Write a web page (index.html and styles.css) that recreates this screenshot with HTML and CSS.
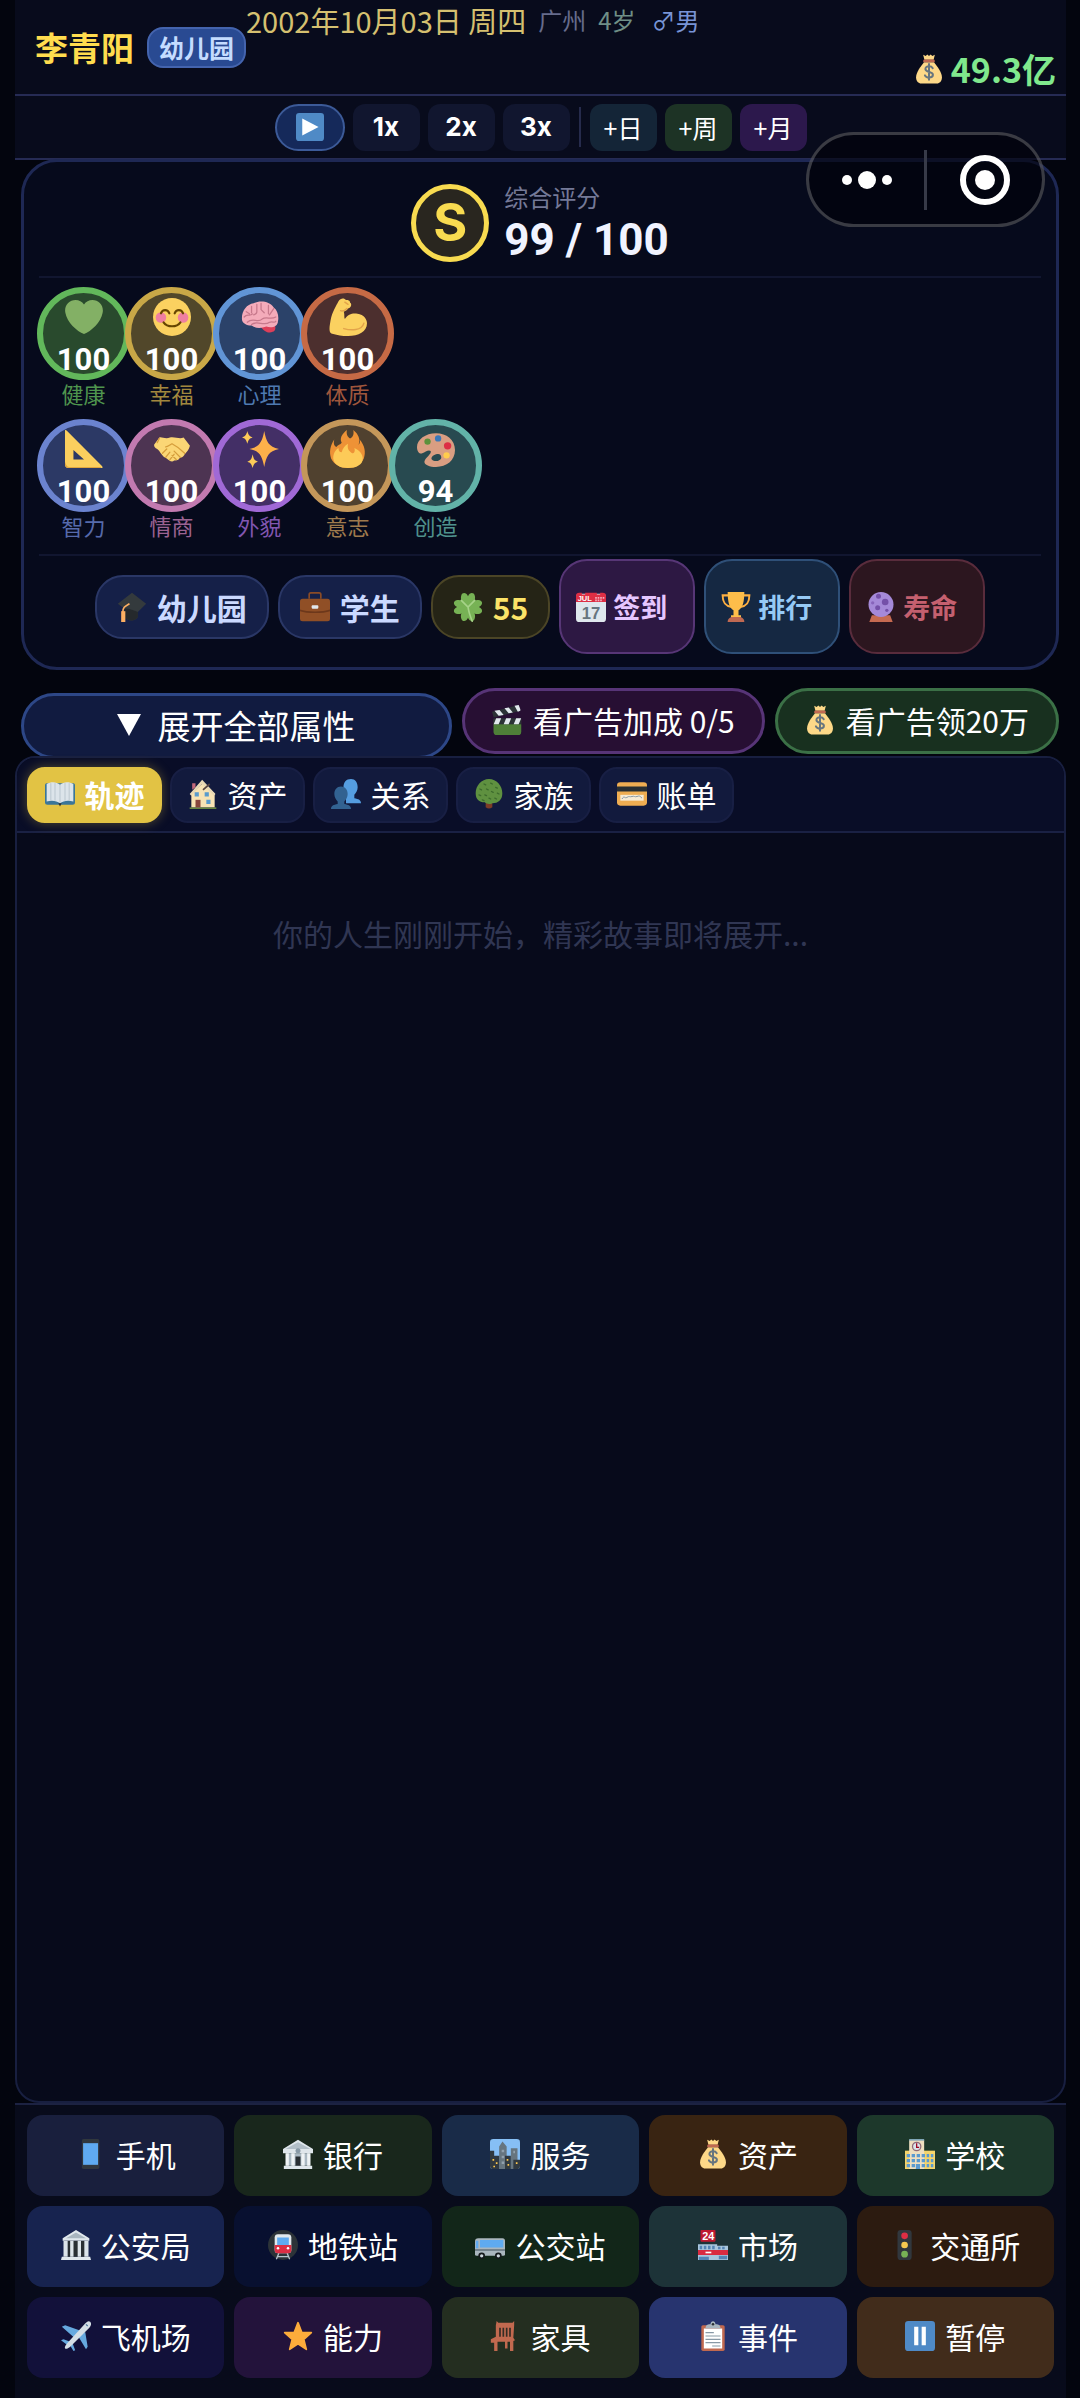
FILE: index.html
```
<!DOCTYPE html>
<html lang="zh-CN">
<head>
  <meta charset="UTF-8">
  <meta name="viewport" content="width=device-width, initial-scale=1.0">
  <title>人生模拟</title>
  <link rel="stylesheet" href="styles.css">
</head>
<body>
  <!-- icon sprite -->
  <svg class="sprite" aria-hidden="true">
    <symbol id="i-bag" viewBox="0 0 36 36">
      <path fill="#fdd888" d="M12 10c-4 5-9.500 12-9.500 18 0 5 3 7.500 6 7.500h19c3 0 6-2.500 6-7.500 0-6-5.500-13-9.500-18z"/>
      <path fill="#fdd888" d="M11 1l3 1.500L16 .5l2 2 2-2 2 2L25 1l-1.500 6h-11z"/>
      <path fill="#bf6952" d="M12 6.500h12c1 0 1.500 3.500 0 3.500H12c-1.500 0-1-3.500 0-3.500z"/>
      <path fill="none" stroke="#67757f" stroke-width="2.400" stroke-linecap="round" d="M22.500 17c-1-1.800-2.700-2.300-4.500-2.300-2.600 0-4.300 1.300-4.300 3.300 0 4.700 9 2.300 9 6.900 0 2.300-2 3.400-4.600 3.400-2.300 0-4.100-.8-5-2.700M18 12v19"/>
    </symbol>
    <symbol id="i-play" viewBox="0 0 36 36">
      <rect width="36" height="36" rx="4" fill="#4f8ac6"/><path fill="#fff" d="M8 7l21 11L8 29z"/>
    </symbol>
    <symbol id="i-pause" viewBox="0 0 36 36">
      <rect width="36" height="36" rx="4" fill="#4f8ac6"/><path fill="#fff" d="M11 7h5v22h-5zM20 7h5v22h-5z"/>
    </symbol>
    <symbol id="i-heart" viewBox="0 0 36 36">
      <path fill="#83b065" d="M35.900 11.800c0-5.400-4.400-9.800-9.900-9.800-3.300 0-6.200 1.600-8 4.100C16.200 3.600 13.300 2 10 2 4.500 2 .1 6.400.1 11.800c0 .8.100 1.500.3 2.300C1.800 22.600 11.200 31.600 18 34c6.800-2.400 16.200-11.400 17.600-19.900.2-.8.300-1.500.3-2.300z"/>
    </symbol>
    <symbol id="i-smile" viewBox="0 0 36 36">
      <circle cx="18" cy="18" r="18" fill="#fbd160"/>
      <circle cx="7.500" cy="18.500" r="5" fill="#ef7fa0"/><circle cx="28.500" cy="18.500" r="5" fill="#ef7fa0"/>
      <path fill="none" stroke="#664500" stroke-width="2" stroke-linecap="round" d="M7.500 14.500c1.500-4 6.500-4 8 0M20.500 14.500c1.500-4 6.500-4 8 0M10 23c3.500 5 12.500 5 16 0"/>
    </symbol>
    <symbol id="i-brain" viewBox="0 0 36 36">
      <path fill="#dd3f59" d="M18 26c3 6 9 8 12 6 3-1 3-4 2-7z"/>
      <path fill="#f4abba" d="M1 21C0 13 5 6 12 5c6-3 15-2 19 4 4 3 5 9 4 13 0 5-6 7-11 5-5 2-10 2-14-1-5 0-8-2-9-5z"/>
      <path fill="none" stroke="#c7798c" stroke-width="1.200" stroke-linecap="round" d="M3 18c3-4 5 0 8-3M10 8v6M15 6v7c0 2-3 3-3 3M19 5v6l3 3M26 7v8M31 10l-4 6M6 23c5-5 10 1 14-3 4-3 8 1 13-2M10 25c5-4 12 2 17-2 3-1 5 1 6-1M5 13l3 2"/>
    </symbol>
    <symbol id="i-arm" viewBox="0 0 36 36">
      <path fill="#fbd160" d="M4 34C-1 34 .5 27 1.500 21 3 13 7 7 9 3c2-3.500 6-3 7-1 0 0 4-.5 4 2.500 2 1 1 5-2 5.500-1 2-4 3-4 3 1 3 0 5 1 7 3-5 8-6 12-5 6 1 9 5 9 9 0 8-8 12-18 12-6 0-10-1-14-2z"/>
      <path fill="none" stroke="#e2a34a" stroke-width="1.400" stroke-linecap="round" d="M14 29c7 2 17 2 19-5M11 12c2 1 5-1 6-2M15 4l3 2"/>
    </symbol>
    <symbol id="i-ruler" viewBox="0 0 36 36">
      <path fill="#fbcf5e" fill-rule="evenodd" d="M0 1c0-2 1-1 2 0l33 33c1 1 1 2-1 2H4c-3 0-4-1-4-4zM8 19v9h10z"/>
      <path fill="#e0a63e" d="M0 30v2c0 3 1 4 4 4h30v-1H4c-2 0-3-2-4-5z"/>
    </symbol>
    <symbol id="i-shake" viewBox="0 0 36 36">
      <path fill="#fbd675" d="M1 14l5-7c2-1 6 2 10 0 5-1 9 2 13 0l6 8c-1 4-3 6-5 8-1 3-4 3-5 4-1 2-4 2-5 2-2 2-5 0-7-2-5-2-6-7-9-9-2-1-3-2-3-4z"/>
      <path fill="none" stroke="#d59d3b" stroke-width="1.200" stroke-linecap="round" d="M12 16c2 0 4-2 6-3 4 2 8 5 12 9M9 22l4-4M12 26l4-5M16 28l4-5M20 20l6 6M18 24l4 4M6 8l-2 4"/>
    </symbol>
    <symbol id="i-sparkle" viewBox="0 0 36 36">
      <path fill="#fdb04a" d="M22 1c2 10 4 15 14 17-10 2-12 7-14 17-2-10-4-15-14-17C18 16 20 11 22 1z"/>
      <path fill="#fdcb58" d="M6 1c1 4 2 5 5 6-3 1-4 2-5 6-1-4-2-5-5-6 3-1 4-2 5-6zM11 23c1 5 2 6 5 7-3 1-4 2-5 6-1-4-2-5-5-6 3-1 4-2 5-7z"/>
    </symbol>
    <symbol id="i-fire" viewBox="0 0 36 36">
      <path fill="#ee9236" d="M12 12c-2-4 0-8 5-12-1 4 1 7 3 8 2-1 4-3 3-8 5 4 7 9 5 14 1-1 2-3 1-5 5 6 6 12 4 18-3 6-8 9-15 9S5 33 2 27C0 21 1 15 5 9c-1 4 0 6 2 7 1-2 4-2 5-4z"/>
      <path fill="#fdcb58" d="M4 27c0-5 2-8 5-10 0 3 1 4 3 4 1-4 3-6 6-8-1 5 1 7 4 9 2 0 3-2 2-5 5 2 8 6 8 10 0 6-6 9-14 9S5 33 4 27z"/>
    </symbol>
    <symbol id="i-palette" viewBox="0 0 36 36">
      <path fill="#d99e82" fill-rule="evenodd" d="M18 3C8 3 0 9 0 16c0 5 3 7 5 6 3-1 6-4 8-2 1 3-5 6-6 10 0 3 5 5 11 5 10 0 18-6 18-16S28 3 18 3zm0 20c3-1 5 0 5 3s-6 5-9 2c-1-2 1-4 4-5z"/>
      <circle cx="10" cy="11" r="3" fill="#5c913b"/><circle cx="20" cy="8" r="3" fill="#3b78b8"/><circle cx="29" cy="15" r="3.500" fill="#dd2e44"/><circle cx="28" cy="24" r="3" fill="#ffcc4d"/>
    </symbol>
    <symbol id="i-cap" viewBox="0 0 36 36">
      <path fill="#343a3d" d="M18 1l17 13-10 10v6c-3 6-13 5-16 0V20L1 14z"/>
      <path fill="#25292c" d="M9 20c6-1 12 3 16 4v6c-3 6-13 5-16 0z"/>
      <path fill="none" stroke="#fdaf62" stroke-width="2" d="M15 14c-5 3-8 4-8 10"/><path fill="#fdaf62" d="M5 23h5v13H5z"/>
    </symbol>
    <symbol id="i-case" viewBox="0 0 36 36">
      <path fill="none" stroke="#8a4b26" stroke-width="2" d="M11 8V3q0-2 2-2h10q2 0 2 2v5"/>
      <rect y="8" width="36" height="27" rx="3" fill="#904f26"/><path fill="#6d381b" d="M0 21c8 3 28 3 36 0v2c-8 3-28 3-36 0z"/><rect x="14" y="16" width="8" height="4" rx="1" fill="#e1e8ed"/>
    </symbol>
    <symbol id="i-clover" viewBox="0 0 36 36">
      <path fill="#77b255" d="M18 18C12 16 8 9 10 4c1-4 6-4 8 1 2-5 7-5 8-1 2 5-2 12-8 14z"/>
      <path fill="#77b255" d="M18 18c2-6 9-10 14-8 4 1 4 6-1 8 5 2 5 7 1 8-5 2-12-2-14-8zM18 18C16 12 9 8 4 10c-4 1-4 6 1 8-5 2-5 7-1 8 5 2 12-2 14-8z"/>
      <path fill="#77b255" d="M18 18c-6 2-10 9-8 14 1 4 6 4 8-1 2 5 7 5 8 1 2-5-2-12-8-14z"/>
      <path fill="none" stroke="#a6d388" stroke-width="2" stroke-linecap="round" d="M10 10l8 8 8-8M18 18c1 7 3 12 5 17"/>
    </symbol>
    <symbol id="i-date" viewBox="0 0 36 36">
      <rect y="2" width="36" height="34" rx="4" fill="#dfe7ed"/><path fill="#dd2e44" d="M0 12V5q0-4 4-4h3v2h4V1h14v2h4V1h3q4 0 4 4v7z"/>
      <path fill="#f4abba" d="M23 6h2v2h-2zM26 6h2v2h-2zM29 6h2v2h-2zM32 6h2v2h-2zM23 9h2v2h-2zM26 9h2v2h-2zM29 9h2v2h-2z"/>
      <text x="2" y="11" class="cal-month">JUL</text><text x="7" y="32" class="cal-day">17</text>
    </symbol>
    <symbol id="i-cup" viewBox="0 0 36 36">
      <path fill="none" stroke="#fdaf42" stroke-width="2.500" d="M9 4H2c0 9 3 13 11 14M27 4h7c0 9-3 13-11 14"/>
      <path fill="#fdbd4a" d="M8 0h20c0 12-2 19-7 22v6h3v3H12v-3h3v-6C10 19 8 12 8 0z"/><path fill="#bf6952" d="M8 36c0-4 3-6 6-6h8c3 0 6 2 6 6z"/>
    </symbol>
    <symbol id="i-crystal" viewBox="0 0 36 36">
      <path fill="#c66a50" d="M7 28h22l3 8H4z"/><circle cx="18" cy="15" r="15" fill="#a589d8"/>
      <circle cx="23" cy="12" r="4" fill="#7450a8"/><circle cx="14" cy="19" r="3" fill="#7450a8"/><circle cx="15" cy="5" r="3" fill="#7450a8"/><circle cx="25" cy="22" r="2" fill="#7450a8"/><circle cx="8" cy="13" r="2" fill="#8764bb"/>
    </symbol>
    <symbol id="i-clap" viewBox="0 0 36 36">
      <path fill="#3d5f32" d="M2 17h33v15q0 4-4 4H6q-4 0-4-4z"/><path fill="#4e7f38" d="M2 23h33v9q0 4-4 4H6q-4 0-4-4z"/>
      <path fill="#2b3236" d="M2 16h33v7H2zM0 8L32 0l2 7L2 15z"/>
      <path fill="#e1e8ed" d="M5 16h6l-3 7H2zM17 16h6l-3 7h-6zM29 16h6l-3 7h-6zM3 7l6-1 5 6-6 1zM15 4l5-1 5 6-5 1zM27 1l5-1 2 5v2l-3 1z"/>
    </symbol>
    <symbol id="i-book" viewBox="0 0 36 36">
      <path fill="#3b7698" d="M0 7q0-2 2-2h32q2 0 2 2v21q0 3-3 3H3q-3 0-3-3z"/>
      <path fill="#dce4ea" d="M2 6c5-3 12-3 16 1 4-4 11-4 16-1v21c-6-2-12-1-16 2-4-3-10-4-16-2z"/>
      <path fill="none" stroke="#b4c0c9" d="M18 7v22M7 5v21M12 5v21M24 5v21M29 5v21"/><path fill="#292f33" d="M16 29h4l-2 4z"/>
    </symbol>
    <symbol id="i-house" viewBox="0 0 36 36">
      <path fill="#66853f" d="M2 34h32v2H2z"/><path fill="#f8e3b4" d="M4 18L18 5l14 12v17H4z"/>
      <path fill="#c2687a" d="M5 13V5h4v5z"/><path fill="#e9d8b4" d="M17 1l16 17-2 2L17 6 4 20l-2-2z"/><path fill="none" stroke="#584542" stroke-width="2" d="M18 13l8-7"/>
      <path fill="#5a9bcc" d="M8 16h5v5H8zM20 16h5v5h-5zM22 25h5v5h-5z"/><path fill="#87463d" d="M9 25h6v9H9z"/>
    </symbol>
    <symbol id="i-people" viewBox="0 0 36 36">
      <path fill="#559de0" d="M24 0c5 0 8 4 8 10 0 4-2 7-4 9v4c5 1 8 2 8 6H18V19c-2-2-3-5-3-9 0-6 3-10 9-10z"/>
      <path fill="#326291" d="M12 9c5 0 8 4 8 9 0 4-2 7-4 9v3c5 1 8 2 8 6H0c0-4 3-5 8-6v-3c-2-2-4-5-4-9 0-5 3-9 8-9z"/>
    </symbol>
    <symbol id="i-tree" viewBox="0 0 36 36">
      <path fill="#7c3d26" d="M14 25h8v9q-4 3-8 0z"/><path fill="#5f9140" d="M18 0c9 0 16 8 16 17 0 8-5 12-12 12-3 2-7 1-9-1C6 28 2 24 2 17 2 8 9 0 18 0z"/>
      <path fill="none" stroke="#3d6b2d" stroke-width="1.600" stroke-linecap="round" d="M12 6l2 1M20 5l2 1M26 10l2 1M7 12l2 1M15 12l2 1M21 15l2 1M28 17l2 1M6 19l2 1M13 19l2 1M18 23l2 1M25 23l2 1M10 25l2 1"/>
    </symbol>
    <symbol id="i-card" viewBox="0 0 36 36">
      <rect y="4" width="36" height="28" rx="4" fill="#efad52"/><path fill="#292f33" d="M0 9h36v6H0z"/><path fill="#f7ebd5" d="M4 19h28v7H4z"/>
      <path fill="none" stroke="#8899a6" stroke-width="1.200" d="M6 24c3-5 3 0 6-2s3 0 6-1 3 1 6 0 3-1 6 2"/>
    </symbol>
    <symbol id="i-phone" viewBox="0 0 36 36">
      <rect x="7" width="21" height="36" rx="2" fill="#31373d"/><path fill="#5faaf0" d="M8.500 5h18v26h-18z"/>
    </symbol>
    <symbol id="i-bank" viewBox="0 0 36 36">
      <path fill="#dfe6eb" d="M0 12L18 1l18 11v5H0zM1 32h34v4H1z"/><path fill="#b2bec7" d="M3 12h30L18 4z"/>
      <path fill="#aab8c2" d="M4 17h28v15H4z"/><path fill="#eff3f5" d="M3 17h4v15H3zM10 17h4v15h-4zM22 17h4v15h-4zM29 17h4v15h-4z"/>
      <circle cx="18" cy="14" r="3" fill="#8899a6"/><path fill="#292f33" d="M15 21h6v11h-6z"/>
    </symbol>
    <symbol id="i-city" viewBox="0 0 36 36">
      <rect width="36" height="36" rx="4" fill="#86bff5"/>
      <path fill="#66757f" d="M11 9l4-6 5 6v27h-9zM25 11h8v25h-8z"/><path fill="#303940" d="M0 14h5v6h6v16H4q-4 0-4-4zM18 20h7v16h-7zM28 25h8v7q0 4-4 4h-4z"/>
      <path fill="#91a1ad" d="M14 13h3v3h-3zM14 20h3v3h-3zM14 27h3v3h-3zM28 14h2v3h-2z"/>
      <path fill="#ffc94d" d="M3 24h2v2H3zM7 28h2v2H7zM20 24h2v2h-2zM21 30h2v2h-2zM31 28h2v2h-2zM4 32h2v2H4z"/>
    </symbol>
    <symbol id="i-school" viewBox="0 0 36 36">
      <path fill="#f4d46b" d="M0 14h36v22H0z"/><path fill="#efdfc0" d="M5 1h18v35H5z"/><path fill="#80a6b7" d="M5 0h18v2H5z"/>
      <path fill="#5a9ad0" d="M2 18h4v4H2zM8 18h4v4H8zM14 18h4v4h-4zM20 18h4v4h-4zM26 18h3v4h-3zM31 18h3v4h-3zM2 24h4v4H2zM8 24h4v4H8zM14 24h4v4h-4zM20 24h4v4h-4zM26 24h3v4h-3zM31 24h3v4h-3zM2 30h4v4H2zM8 30h4v4H8zM13 30h5v6h-5zM20 30h4v4h-4zM26 30h3v4h-3zM31 30h3v4h-3z"/>
      <circle cx="14" cy="9" r="5" fill="#dbe3ea" stroke="#8d6a78" stroke-width="1.500"/><path fill="none" stroke="#a0041e" stroke-width="1.500" d="M14 5v5h3"/>
    </symbol>
    <symbol id="i-temple" viewBox="0 0 36 36">
      <path fill="#e1e8ed" d="M2 10L18 0l16 10v3H2zM1 32h34l1 4H0z"/><path fill="#a9b6bf" d="M6 10h24L18 3z"/>
      <path fill="#292f33" d="M4 13h28v19H4z"/><path fill="#dce4ea" d="M3 13h5v19H3zM11 13h4v19h-4zM20 13h4v19h-4zM28 13h5v19h-5z"/>
    </symbol>
    <symbol id="i-metro" viewBox="0 0 36 36">
      <circle cx="18" cy="18" r="18" fill="#2c3338"/><path fill="none" stroke="#b8c4cc" stroke-width="1.600" d="M13 28l-3 7M23 28l3 7M11 32h14"/>
      <rect x="8" y="5" width="20" height="23" rx="4" fill="#e1e8ed"/><path fill="#dd2e44" d="M8 18h20v6q0 4-4 4H12q-4 0-4-4z"/><path fill="#5faaf0" d="M11 9h14v9H11z"/>
      <circle cx="12" cy="22" r="1.500" fill="#fff"/><circle cx="24" cy="22" r="1.500" fill="#fff"/>
    </symbol>
    <symbol id="i-bus" viewBox="0 0 36 36">
      <path fill="#aab6be" d="M0 14q0-4 4-4h29q3 0 3 3v16q0 2-2 2H2q-2 0-2-2z"/><path fill="#5faaf0" d="M1 13h3v9H1zM6 12h28v9H6z"/><path fill="#697782" d="M0 23h36v2H0z"/>
      <circle cx="8" cy="31" r="4" fill="#15191c"/><circle cx="28" cy="31" r="4" fill="#15191c"/><circle cx="8" cy="31" r="2" fill="#ccd6dd"/><circle cx="28" cy="31" r="2" fill="#ccd6dd"/>
    </symbol>
    <symbol id="i-store" viewBox="0 0 36 36">
      <rect x="3" width="18" height="14" rx="1" fill="#be1931"/><text x="5" y="12" class="store-num">24</text>
      <path fill="#a9c6de" d="M0 17h23v19H0zM23 19h13v17H23z"/><path fill="#5484b5" d="M2 19h3v4H2zM7 19h3v4H7zM12 19h3v4h-3zM17 19h3v4h-3zM24 20h3v3h-3zM29 20h3v3h-3zM1 32h12v4H1zM25 31h10v4H25z"/>
      <path fill="#d92b41" d="M0 24h36v6H0z"/><path fill="#fff" d="M9 26h7v2H9z"/>
    </symbol>
    <symbol id="i-light" viewBox="0 0 36 36">
      <rect x="9" width="17" height="36" rx="4" fill="#31373d"/><circle cx="17.500" cy="7" r="4" fill="#dd2e44"/><circle cx="17.500" cy="18" r="4" fill="#f7c94f"/><circle cx="17.500" cy="29" r="4" fill="#77b255"/>
    </symbol>
    <symbol id="i-plane" viewBox="0 0 36 36">
      <path fill="#66a9df" d="M1 7l4-2 17 6-6 9zM29 13l3 18-2 3-9-15zM0 23l3-1 8 3-3 4zM14 27l3 8-2 1-5-8z"/>
      <path fill="#d5dfe6" d="M35 1c2 2 1 5-1 7L12 30c-3 3-6 4-7 3s0-4 3-7L29 3c2-2 4-4 6-2z"/><path stroke="#4b7599" stroke-width="1.500" d="M30 4l2 2"/>
    </symbol>
    <symbol id="i-star" viewBox="0 0 36 36">
      <path fill="#fdac3b" stroke="#fdac3b" stroke-width="2" stroke-linejoin="round" d="M18 2l4.500 11.500L34 14l-9 8 3 12-10-6.500L8 34l3-12-9-8 11.500-.5z"/>
    </symbol>
    <symbol id="i-chair" viewBox="0 0 36 36">
      <path fill="#c1694f" d="M8 0l2 2h17l2-2v5l-1 15 2 3-2 1v12h-4V25h-3v8h-3v-8H9v11H5V26H1v-4l6-3V5z"/><path fill="#352c24" d="M11 8h2v11h-2zM15 8h2v11h-2zM19 8h2v11h-2zM23 8h2v11h-2z"/>
    </symbol>
    <symbol id="i-board" viewBox="0 0 36 36">
      <rect x="4" y="5" width="28" height="31" rx="2" fill="#c1694f"/><path fill="#fff" d="M7 9h22v24H7z"/><path fill="#a9b6bf" d="M9 9c0-5 4-5 6-5 0-5 6-5 6 0 2 0 6 0 6 5z"/><circle cx="18" cy="4" r="1.500" fill="#292f33"/>
      <path stroke="#8899a6" stroke-width="1.400" d="M9 14h10M9 18h18M9 22h18M9 26h18M17 30h10"/>
    </symbol>
  </svg>

  <div class="app">
    <header class="topbar">
      <div class="player">
        <h1 class="player-name">李青阳</h1>
        <span class="badge">幼儿园</span>
      </div>
      <div class="info">
        <span class="date">2002年10月03日 周四</span>
        <span class="city">广州</span>
        <span class="age">4岁</span>
        <span class="gender">♂男</span>
      </div>
      <div class="money"><svg class="icon"><use href="#i-bag"/></svg>49.3亿</div>
    </header>

    <div class="controls">
      <button class="speed play" aria-label="播放"><svg class="icon"><use href="#i-play"/></svg></button>
      <button class="speed">1x</button>
      <button class="speed">2x</button>
      <button class="speed">3x</button>
      <span class="divider"></span>
      <button class="speed step day">+日</button>
      <button class="speed step week">+周</button>
      <button class="speed step month">+月</button>
    </div>

    <!-- mini program menu, floats above the page -->
    <div class="capsule">
      <button aria-label="更多"><svg width="52" height="20" viewBox="0 0 52 20"><circle cx="6" cy="10" r="5"/><circle cx="26" cy="10" r="9"/><circle cx="46" cy="10" r="5"/></svg></button>
      <button aria-label="关闭"><svg width="52" height="52" viewBox="0 0 52 52"><circle class="ring" cx="26" cy="26" r="22"/><circle cx="26" cy="26" r="10"/></svg></button>
    </div>

    <section class="card">
      <div class="score">
        <div class="grade">S</div>
        <div>
          <div class="score-label">综合评分</div>
          <div class="score-value">99 / 100</div>
        </div>
      </div>

      <div class="stats">
        <div class="stat-row">
          <div class="stat health"><div class="orb"><svg class="icon"><use href="#i-heart"/></svg><b>100</b></div><span>健康</span></div>
          <div class="stat happy"><div class="orb"><svg class="icon"><use href="#i-smile"/></svg><b>100</b></div><span>幸福</span></div>
          <div class="stat mind"><div class="orb"><svg class="icon"><use href="#i-brain"/></svg><b>100</b></div><span>心理</span></div>
          <div class="stat body"><div class="orb"><svg class="icon"><use href="#i-arm"/></svg><b>100</b></div><span>体质</span></div>
        </div>
        <div class="stat-row">
          <div class="stat iq"><div class="orb"><svg class="icon"><use href="#i-ruler"/></svg><b>100</b></div><span>智力</span></div>
          <div class="stat eq"><div class="orb"><svg class="icon"><use href="#i-shake"/></svg><b>100</b></div><span>情商</span></div>
          <div class="stat looks"><div class="orb"><svg class="icon"><use href="#i-sparkle"/></svg><b>100</b></div><span>外貌</span></div>
          <div class="stat will"><div class="orb"><svg class="icon"><use href="#i-fire"/></svg><b>100</b></div><span>意志</span></div>
          <div class="stat create"><div class="orb"><svg class="icon"><use href="#i-palette"/></svg><b>94</b></div><span>创造</span></div>
        </div>
      </div>

      <div class="chips">
        <span class="chip"><svg class="icon"><use href="#i-cap"/></svg>幼儿园</span>
        <span class="chip"><svg class="icon"><use href="#i-case"/></svg>学生</span>
        <span class="chip luck"><svg class="icon"><use href="#i-clover"/></svg>55</span>
        <button class="chip-btn sign"><svg class="icon"><use href="#i-date"/></svg>签到</button>
        <button class="chip-btn rank"><svg class="icon"><use href="#i-cup"/></svg>排行</button>
        <button class="chip-btn life"><svg class="icon"><use href="#i-crystal"/></svg>寿命</button>
      </div>
    </section>

    <div class="actions">
      <button class="action expand"><svg class="tri" viewBox="0 0 24 22"><path fill="#fff" d="M0 0h24L12 22z"/></svg>展开全部属性</button>
      <button class="action boost"><svg class="icon"><use href="#i-clap"/></svg>看广告加成 0/5</button>
      <button class="action cash"><svg class="icon"><use href="#i-bag"/></svg>看广告领20万</button>
    </div>

    <main class="panel">
      <nav class="tabs">
        <button class="tab active"><svg class="icon"><use href="#i-book"/></svg>轨迹</button>
        <button class="tab"><svg class="icon"><use href="#i-house"/></svg>资产</button>
        <button class="tab"><svg class="icon"><use href="#i-people"/></svg>关系</button>
        <button class="tab"><svg class="icon"><use href="#i-tree"/></svg>家族</button>
        <button class="tab"><svg class="icon"><use href="#i-card"/></svg>账单</button>
      </nav>
      <p class="empty">你的人生刚刚开始，精彩故事即将展开...</p>
    </main>

    <nav class="menu">
      <button class="phone"><svg class="icon"><use href="#i-phone"/></svg>手机</button>
      <button class="bank"><svg class="icon"><use href="#i-bank"/></svg>银行</button>
      <button class="service"><svg class="icon"><use href="#i-city"/></svg>服务</button>
      <button class="asset"><svg class="icon"><use href="#i-bag"/></svg>资产</button>
      <button class="school"><svg class="icon"><use href="#i-school"/></svg>学校</button>
      <button class="police"><svg class="icon"><use href="#i-temple"/></svg>公安局</button>
      <button class="metro"><svg class="icon"><use href="#i-metro"/></svg>地铁站</button>
      <button class="bus"><svg class="icon"><use href="#i-bus"/></svg>公交站</button>
      <button class="market"><svg class="icon"><use href="#i-store"/></svg>市场</button>
      <button class="traffic"><svg class="icon"><use href="#i-light"/></svg>交通所</button>
      <button class="airport"><svg class="icon"><use href="#i-plane"/></svg>飞机场</button>
      <button class="skill"><svg class="icon"><use href="#i-star"/></svg>能力</button>
      <button class="furniture"><svg class="icon"><use href="#i-chair"/></svg>家具</button>
      <button class="event"><svg class="icon"><use href="#i-board"/></svg>事件</button>
      <button class="pause"><svg class="icon"><use href="#i-pause"/></svg>暂停</button>
    </nav>
  </div>
</body>
</html>
```

FILE: styles.css
```
* {
    box-sizing: border-box;
}

body {
    margin: 0;
    background-color: #03050e;
    color: #fff;
    font-family: "Noto Sans CJK SC", "Noto Sans", sans-serif;
    font-size: 30px;
}

button {
    border: none;
    padding: 0;
    margin: 0;
    color: inherit;
    font: inherit;
    cursor: pointer;
}

.sprite {
    display: none;
}

.icon {
    width: 30px;
    height: 30px;
    flex: none;
}

.app {
    position: relative;
    display: flex;
    flex-direction: column;
    min-height: 100vh;
    margin: 0 14px 0 15px;
}

/* top bar */
.topbar {
    display: flex;
    height: 96px;
    padding: 0 10px 0 20px;
    background-color: #080b1c;
    border-bottom: 2px solid #262b54;
}

.player {
    display: flex;
    align-items: center;
    gap: 13px;
}

.player-name {
    margin: 0;
    font-size: 33px;
    line-height: 40px;
    color: #ffdc4e;
}

.badge {
    padding: 0 10px;
    border: 2px solid #4464ae;
    border-radius: 16px;
    background-color: #294a92;
    color: #c4dcff;
    font-size: 25px;
    font-weight: bold;
    line-height: 37px;
}

.info {
    display: flex;
    gap: 12px;
    font-size: 24px;
    line-height: 40px;
}

.date {
    color: #d5c070;
    font-size: 29px;
}

.city {
    color: #666c8c;
}

.age {
    color: #6f8f86;
}

.gender {
    margin-left: 4px;
    color: #7894d6;
}

.money {
    display: flex;
    align-items: center;
    align-self: flex-end;
    gap: 7px;
    margin-left: auto;
    padding-bottom: 3px;
    color: #80e88d;
    font-size: 34px;
    font-weight: bold;
    line-height: 44px;
}

/* speed controls */
.controls {
    display: flex;
    align-items: center;
    justify-content: center;
    gap: 8px;
    height: 64px;
    background-color: #080b1c;
    border-bottom: 2px solid #262b54;
}

.speed {
    width: 67px;
    height: 47px;
    border-radius: 12px;
    background-color: #11162f;
    font-family: Inter, "Noto Sans CJK SC", sans-serif;
    font-size: 26px;
    font-weight: bold;
    line-height: 40px;
}

.play {
    display: flex;
    align-items: center;
    justify-content: center;
    width: 70px;
    border: 2px solid #3c5a98;
    border-radius: 24px;
    background-color: #15295a;
}

.play .icon {
    width: 28px;
    height: 28px;
}

.step {
    font-family: "Noto Sans CJK SC", sans-serif;
    font-size: 25px;
    font-weight: normal;
}

.divider {
    width: 2px;
    height: 40px;
    margin: 0 1px;
    background-color: #262b4c;
}

.day { background-color: #142537; }
.week { background-color: #1d3325; }
.month { background-color: #2c184c; }

.capsule {
    position: absolute;
    top: 132px;
    right: 21px;
    z-index: 2;
    display: flex;
    align-items: center;
    width: 239px;
    height: 95px;
    border: 3px solid rgba(255, 255, 255, 0.22);
    border-radius: 48px;
    background-color: rgba(0, 0, 8, 0.6);
}

.capsule button {
    display: flex;
    align-items: center;
    justify-content: center;
    flex: 1;
    height: 60px;
    background: none;
}

.capsule button + button {
    border-left: 3px solid #373a48;
}

.capsule svg {
    fill: #fff;
}

.capsule .ring {
    fill: none;
    stroke: #fff;
    stroke-width: 6px;
}

/* attribute card */
.card {
    margin: -1px 7px 0 6px;
    padding: 0 15px 13px;
    border: 3px solid #1e2854;
    border-radius: 36px;
    background-color: #060a1c;
}

.score {
    display: flex;
    align-items: center;
    justify-content: center;
    gap: 15px;
    height: 116px;
    padding-top: 8px;
    border-bottom: 2px solid #111630;
}

.grade {
    width: 78px;
    height: 78px;
    border: 5px solid #f8db50;
    border-radius: 50%;
    background-color: #29261f;
    color: #f8db50;
    font-family: Inter, sans-serif;
    font-size: 52px;
    font-weight: bold;
    line-height: 68px;
    text-align: center;
}

.score-label {
    color: #747997;
    font-size: 24px;
    line-height: 35px;
}

.score-value {
    color: #f0f3ff;
    font-family: Roboto, sans-serif;
    font-size: 44px;
    font-weight: bold;
    line-height: 53px;
}

.stats {
    padding-top: 9px;
    border-bottom: 2px solid #111630;
}

.stat-row {
    display: flex;
    height: 132px;
    margin-left: -2px;
}

.stat-row:last-child {
    height: 135px;
}

.stat {
    width: 93px;
    margin-right: -5px;
    font-size: 22px;
    line-height: 26px;
    text-align: center;
}

.orb {
    display: flex;
    flex-direction: column;
    align-items: center;
    gap: 8px;
    height: 93px;
    padding-top: 5px;
    border: 6px solid currentColor;
    border-radius: 50%;
}

.orb .icon {
    width: 38px;
    height: 38px;
}

.orb b {
    color: #fff;
    font-family: Roboto, sans-serif;
    font-size: 31px;
    line-height: 32px;
}

.stat span {
    opacity: 0.8;
}

.health { color: #62b85b; }
.happy { color: #c9a847; }
.mind { color: #6195d6; }
.body { color: #c66a45; }
.iq { color: #6b83cf; }
.eq { color: #c27ab0; }
.looks { color: #a069d6; }
.will { color: #c4975a; }
.create { color: #62b3a8; }

.health .orb { background-color: #294a2d; }
.happy .orb { background-color: #51472a; }
.mind .orb { background-color: #2b4269; }
.body .orb { background-color: #4c2f2e; }
.iq .orb { background-color: #2c3965; }
.eq .orb { background-color: #4d3452; }
.looks .orb { background-color: #432f66; }
.will .orb { background-color: #50412f; }
.create .orb { background-color: #284a50; }

.chips {
    display: flex;
    align-items: center;
    justify-content: center;
    gap: 9px;
    padding-top: 3px;
}

.chip {
    display: flex;
    align-items: center;
    gap: 10px;
    height: 64px;
    padding: 0 20px;
    border: 2px solid #2a3766;
    border-radius: 28px;
    background-color: #152048;
    color: #cbd9ff;
    font-weight: bold;
    line-height: 40px;
}

.luck {
    border-color: #4b4526;
    background-color: #252416;
    color: #fbe368;
}

.chip-btn {
    display: flex;
    align-items: center;
    gap: 7px;
    width: 136px;
    height: 95px;
    padding-left: 15px;
    border: 2px solid;
    border-radius: 28px;
    font-size: 27px;
    font-weight: bold;
}

.sign {
    border-color: #573676;
    background-color: #2d1843;
    color: #e5c6ff;
}

.rank {
    border-color: #2f5078;
    background-color: #152842;
    color: #96caf5;
}

.life {
    border-color: #592c3c;
    background-color: #2c161f;
    color: #c5606f;
}

.cal-month {
    fill: #fff;
    font: bold 9px "Liberation Sans", sans-serif;
}

.cal-day {
    fill: #66757f;
    font: bold 20px "Liberation Sans", sans-serif;
}

.store-num {
    fill: #fff;
    font: bold 13px "Liberation Sans", sans-serif;
}

/* wide buttons under the card */
.actions {
    display: flex;
    align-items: flex-start;
    gap: 10px;
    height: 86px;
    padding: 18px 7px 0 6px;
}

.action {
    display: flex;
    align-items: center;
    justify-content: center;
    gap: 11px;
    height: 66px;
    padding: 0 27px 2px;
    border: 3px solid;
    border-radius: 34px;
    white-space: nowrap;
}

.expand {
    flex: 1;
    gap: 16px;
    margin-top: 5px;
    border-color: #2d4787;
    background-color: #111b40;
    font-size: 33px;
}

.tri {
    width: 24px;
    height: 22px;
}

.boost {
    border-color: #573477;
    background-color: #270f33;
}

.cash {
    border-color: #3b7046;
    background-color: #18301f;
}

/* main panel */
.panel {
    position: relative;
    flex: 1;
    border: 2px solid #181f40;
    border-radius: 20px 20px 24px 24px;
    background-color: #070a1b;
}

.tabs {
    display: flex;
    gap: 8px;
    padding: 9px 10px 8px;
    border-bottom: 2px solid #1a2144;
    border-radius: 18px 18px 0 0;
    background-color: #090d27;
}

.tab {
    display: flex;
    align-items: center;
    justify-content: center;
    gap: 10px;
    width: 135px;
    height: 56px;
    padding-bottom: 2px;
    border: 2px solid #181f44;
    border-radius: 18px;
    background-color: #121a3d;
    line-height: 40px;
}

.tab.active {
    border-color: #e2c344;
    background-color: #e2c344;
    box-shadow: 0 0 12px rgba(226, 195, 68, 0.35);
    font-weight: bold;
}

.empty {
    margin: 78px 0 0;
    color: #303653;
    line-height: 44px;
    text-align: center;
}

/* bottom menu */
.menu {
    display: grid;
    grid-template-columns: repeat(5, 1fr);
    gap: 10px;
    padding: 10px 12px 20px;
    border-top: 2px solid #1c2242;
    background-color: #080b1b;
}

.menu button {
    display: flex;
    align-items: center;
    justify-content: center;
    gap: 10px;
    height: 81px;
    padding-bottom: 3px;
    border-radius: 16px;
}

.phone { background-color: #191f3d; }
.bank { background-color: #19271c; }
.service { background-color: #192b48; }
.asset { background-color: #392412; }
.school { background-color: #1d382b; }
.police { background-color: #17234f; }
.metro { background-color: #081030; }
.bus { background-color: #122619; }
.market { background-color: #1d3338; }
.traffic { background-color: #2c1b10; }
.airport { background-color: #12113a; }
.skill { background-color: #23133b; }
.furniture { background-color: #242e20; }
.event { background-color: #27346f; }
.pause { background-color: #412c1b; }
```
